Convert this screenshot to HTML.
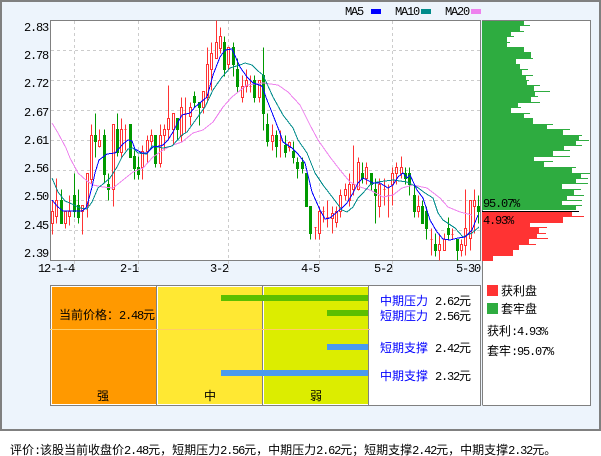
<!DOCTYPE html>
<html lang="zh-CN"><head><meta charset="utf-8"><title>评价</title>
<style>
html,body{margin:0;padding:0;background:#fff}
#w{position:relative;width:601px;height:456px;overflow:hidden;background:#fff}
#p{position:absolute;left:0;top:0;width:597px;height:427px;border:2px solid #808080;background:#edf4fc}
svg{position:absolute;left:0;top:0}
.t{position:absolute;white-space:nowrap;font:12px/12px "Liberation Sans","WenQuanYi Zen Hei","Noto Sans CJK SC",sans-serif;color:#000}
.t i,.n{font:normal 12px/12px "Liberation Mono",monospace;letter-spacing:-1.2px}
.n{position:absolute;white-space:nowrap;color:#000}
.b{color:#00f}
</style></head><body><div id="w"><div id="p"></div>
<svg width="601" height="456" viewBox="0 0 601 456">
<g shape-rendering="crispEdges">
<rect x="50.5" y="20.5" width="430" height="240" fill="#fff" stroke="#808080"/>
<rect x="482" y="20" width="109" height="385" fill="#fff"/>
<path d="M482.5 405V20.5H590.5V405.5H482.5" fill="none" stroke="#808080"/>
<path d="M51 50.5H480M51 80.5H480M51 110.5H480M51 140.5H480M51 170.5H480M51 200.5H480M51 230.5H480M74.5 21V273M138.5 21V273M228.5 21V273M319.5 21V273M392.5 21V273" fill="none" stroke="#ccc" stroke-dasharray="3 3"/>
<path d="M482 21H524V25H530V26H520V31H524V32H511V36H514V37H507V42H510V43H507V47H524V52H531V58H533V59H516V64H520V69H528V70H522V75H533V76H526V80H529V81H527V85H540V86H534V91H550V92H535V96H538V97H531V102H540V103H518V107H521V108H511V113H530V114H524V118H533V124H553V125H547V129H570V130H563V135H582V136H579V140H589V141H576V145H582V146H564V150H570V151H553V156H570V157H534V161H553V162H544V167H576V168H572V173H590V174H581V178H588V179H576V183H588V184H562V189H581V190H574V195H584V196H567V200H582V201H562V205H582V206H576V210H482Z" fill="#2eac40"/>
<path d="M482 212H572V216H584V217H563V223H530V227H547V228H539V233H546V234H537V238H548V239H529V244H536V245H519V250H513V256H493V261H482Z" fill="#f33"/>
<rect x="482" y="211" width="97" height="1" fill="#000"/>
<g transform="translate(.5 .5)" fill="#fff" stroke="#f33">
<path d="M52 200V211M52 223V234M51 211h2v12h-2zM56 178V200M56 216V223M55 200h2v16h-2zM65 211V211M65 223V228M64 211h2v12h-2zM69 195V211M69 216V225M68 211h2v5h-2zM82 205V205M82 211V234M81 205h2v6h-2zM87 173V173M87 205V217M86 173h2v32h-2zM91 124V135M91 179V183M90 135h2v44h-2zM99 129V140M99 146V147M98 140h2v6h-2zM113 124V124M113 189V206M112 124h2v65h-2zM121 118V129M121 152V158M120 129h2v23h-2zM125 124V150M124 129h2M142 145V151M142 167V179M141 151h2v16h-2zM147 135V140M147 151V162M146 140h2v11h-2zM151 129V135M151 141V148M150 135h2v6h-2zM160 124V135M160 163V167M159 135h2v28h-2zM164 124V129M164 135V150M163 129h2v6h-2zM168 85V118M168 129V140M167 118h2v11h-2zM173 113V113M173 129V145M172 113h2v16h-2zM181 97V107M181 135V141M180 107h2v28h-2zM185 97V132M184 113h2M190 102V107M190 116V125M189 107h2v9h-2zM203 91V91M203 107V113M202 91h2v16h-2zM207 47V64M207 97V102M206 64h2v33h-2zM211 42V53M211 69V90M210 53h2v16h-2zM216 20V42M215 42h2v16h-2zM220 27V36M220 48V53M219 36h2v12h-2zM228 47V47M228 64V69M227 47h2v17h-2zM242 75V86M242 97V102M241 86h2v11h-2zM246 69V80M246 86V92M245 80h2v6h-2zM250 75V92M249 86h2M259 80V80M259 97V102M258 80h2v17h-2zM272 124V135M272 141V150M271 135h2v6h-2zM280 130V157M279 140h2M289 141V142M289 147V151M288 142h2v5h-2zM315 227V239M314 227h2M319 206V211M319 233V239M318 211h2v22h-2zM323 206V222M322 211h2M327 200V227M326 217h2M332 206V213M332 218V233M331 213h2v5h-2zM336 206V211M336 222V227M335 211h2v11h-2zM340 189V195M340 211V217M339 195h2v16h-2zM345 183V189M345 195V200M344 189h2v6h-2zM349 173V184M349 200V206M348 184h2v16h-2zM353 145V184M353 189V195M352 184h2v5h-2zM358 157V162M358 189V190M357 162h2v27h-2zM366 162V167M366 178V184M365 167h2v11h-2zM379 178V184M379 206V217M378 184h2v22h-2zM384 178V205M383 189h2M388 184V217M387 195h2M392 167V173M392 184V205M391 173h2v11h-2zM396 162V167M396 173V184M395 167h2v6h-2zM401 156V167M401 173V178M400 167h2v6h-2zM418 195V206M418 211V217M417 206h2v5h-2zM431 228V255M430 239h2M439 233V244M439 250V260M438 244h2v6h-2zM444 233V239M443 239h2v11h-2zM452 228V239M451 234h2M461 239V244M461 250V256M460 244h2v6h-2zM465 189V228M465 245V255M464 228h2v17h-2zM470 200V200M470 238V250M469 200h2v38h-2zM474 189V200M474 206V233M473 200h2v6h-2z"/>
</g>
<g transform="translate(.5 .5)" fill="#090" stroke="#090">
<path d="M61 189V223M60 200h2v23h-2zM74 173V217M73 195h2v16h-2zM78 189V223M77 205h2v12h-2zM95 113V157M94 135h2v6h-2zM104 129V183M103 135h2v39h-2zM108 173V200M107 184h2v5h-2zM117 113V156M116 129h2v23h-2zM130 124V157M129 124h2v33h-2zM134 150V179M133 156h2v12h-2zM138 156V179M137 167h2v7h-2zM155 135V167M154 135h2v28h-2zM177 118V140M176 118h2v11h-2zM194 91V107M193 96h2v6h-2zM199 102V125M198 102h2v5h-2zM224 36V76M223 42h2v27h-2zM233 42V76M232 47h2v17h-2zM237 58V92M236 69h2v17h-2zM254 75V102M253 80h2v17h-2zM263 47V130M262 75h2v38h-2zM267 113V146M266 124h2v17h-2zM276 130V157M275 135h2v11h-2zM285 135V157M284 145h2v7h-2zM293 141V163M292 151h2v6h-2zM297 157V178M296 162h2v6h-2zM302 157V173M301 162h2v6h-2zM306 173V206M305 173h2v33h-2zM310 206V239M309 206h2v27h-2zM362 162V183M361 173h2v5h-2zM371 173V190M370 173h2v11h-2zM375 178V223M374 189h2v6h-2zM405 167V184M404 173h2v5h-2zM409 167V195M408 173h2v11h-2zM414 184V217M413 195h2v16h-2zM422 200V223M421 206h2v17h-2zM426 206V239M425 211h2v17h-2zM435 233V256M434 244h2v6h-2zM448 217V239M447 228h2v6h-2zM457 239V260M456 239h2v11h-2zM478 195V223M477 206h2v5h-2z"/>
</g>
<g fill="none" stroke-width="1">
<polyline stroke="#ee82ee" points="52,123 58,133 66,148 70,158 78,173 87,181 93,185 103,187 113,188 123,180 133,172 143,168 153,157 163,150 173,145 182,142 193,133 203,130 213,122 223,107 232,97 247,85 263,83 278,85 288,92 300,105 310,125 318,140 330,157 340,170 350,182 360,187 370,190 383,197 393,195 402,188 413,185 427,188 440,198 448,207 460,212 472,215"/>
<polyline stroke="#008b8b" points="52,178 58,192 65,201 72,204 80,208 87,209 92,202 98,188 103,184 110,178 117,167 122,157 128,149 133,148 138,153 147,154 152,146 163,148 172,146 182,135 187,132 197,118 205,107 213,90 222,77 230,68 240,65 245,63 252,65 258,71 263,75 273,97 283,115 293,128 298,140 307,153 315,173 323,185 333,198 342,210 347,212 353,207 358,198 363,193 370,185 377,182 385,181 393,180 407,182 417,187 425,193 433,198 438,213 443,220 455,228 463,237 472,233 479,227"/>
<polyline stroke="#00f" points="52,200 58,207 63,211 68,211 75,211 82,211 86,208 88,202 92,187 95,173 99,160 107,154 115,153 123,144 128,140 132,141 135,149 142,153 147,153 153,147 160,146 163,145 168,140 173,132 178,122 182,115 190,113 195,107 207,97 213,75 220,57 225,50 232,49 240,67 247,77 253,83 262,86 267,100 273,115 280,133 283,142 292,148 298,154 305,163 312,192 320,210 325,219 330,218 337,212 342,208 347,203 353,193 358,183 363,178 373,183 380,183 388,188 393,185 398,177 403,173 407,178 410,175 417,190 423,198 430,220 437,232 443,239 450,240 458,238 465,237 472,230 478,215"/>
</g>
<rect x="371" y="9" width="10" height="5" fill="#00f"/><rect x="421" y="9" width="10" height="5" fill="#008b8b"/><rect x="471" y="9" width="10" height="5" fill="#ee82ee"/>
<rect x="50.5" y="285.5" width="430" height="120" fill="#fff" stroke="#808080"/>
<rect x="52" y="287" width="104" height="117" fill="#f90"/>
<rect x="158" y="287" width="104" height="117" fill="#ffe833"/>
<rect x="264" y="287" width="104" height="117" fill="#dced00"/>
<path d="M156.5 286V405M262.5 286V405M368.5 286V405" stroke="#808080" fill="none"/>
<rect x="50" y="329" width="320" height="1" fill="#fc6"/>
<rect x="221" y="295" width="147" height="6" fill="#5cbf00"/>
<rect x="327" y="310" width="41" height="6" fill="#5cbf00"/>
<rect x="327" y="344" width="41" height="6" fill="#4a9aee"/>
<rect x="221" y="370" width="147" height="6" fill="#4a9aee"/>
<rect x="487" y="285" width="11" height="11" fill="#f33"/>
<rect x="487" y="303" width="11" height="11" fill="#2eac40"/>
</g>
</svg>
<span class="n" style="left:24px;top:22px">2.83</span>
<span class="n" style="left:24px;top:50px">2.78</span>
<span class="n" style="left:24px;top:78px">2.72</span>
<span class="n" style="left:24px;top:107px">2.67</span>
<span class="n" style="left:24px;top:135px">2.61</span>
<span class="n" style="left:24px;top:163px">2.56</span>
<span class="n" style="left:24px;top:191px">2.50</span>
<span class="n" style="left:24px;top:220px">2.45</span>
<span class="n" style="left:24px;top:248px">2.39</span>
<span class="n" style="left:38px;top:263px">12-1-4</span>
<span class="n" style="left:120px;top:263px">2-1</span>
<span class="n" style="left:210px;top:263px">3-2</span>
<span class="n" style="left:301px;top:263px">4-5</span>
<span class="n" style="left:374px;top:263px">5-2</span>
<span class="n" style="left:456px;top:263px">5-30</span>
<span class="n" style="left:345px;top:6px">MA5</span>
<span class="n" style="left:395px;top:6px">MA10</span>
<span class="n" style="left:445px;top:6px">MA20</span>
<span class="n" style="left:483px;top:198px">95.07%</span>
<span class="n" style="left:483px;top:215px">4.93%</span>
<div class="t" style="left:59px;top:309px">当前价格：<i>2.48</i>元</div>
<div class="t" style="left:97px;top:390px">强</div>
<div class="t" style="left:204px;top:390px">中</div>
<div class="t" style="left:310px;top:390px">弱</div>
<div class="t b" style="left:380px;top:295px">中期压力</div><div class="t" style="left:435px;top:295px"><i>2.62</i>元</div>
<div class="t b" style="left:380px;top:310px">短期压力</div><div class="t" style="left:435px;top:310px"><i>2.56</i>元</div>
<div class="t b" style="left:380px;top:342px">短期支撑</div><div class="t" style="left:435px;top:342px"><i>2.42</i>元</div>
<div class="t b" style="left:380px;top:370px">中期支撑</div><div class="t" style="left:435px;top:370px"><i>2.32</i>元</div>
<div class="t" style="left:501px;top:285px">获利盘</div>
<div class="t" style="left:501px;top:303px">套牢盘</div>
<div class="t" style="left:487px;top:325px">获利<i>:4.93%</i></div>
<div class="t" style="left:487px;top:345px">套牢<i>:95.07%</i></div>
<div class="t" style="left:10px;top:444px">评价<i>:</i>该股当前收盘价<i>2.48</i>元，短期压力<i>2.56</i>元，中期压力<i>2.62</i>元；短期支撑<i>2.42</i>元，中期支撑<i>2.32</i>元。</div>
</div></body></html>
